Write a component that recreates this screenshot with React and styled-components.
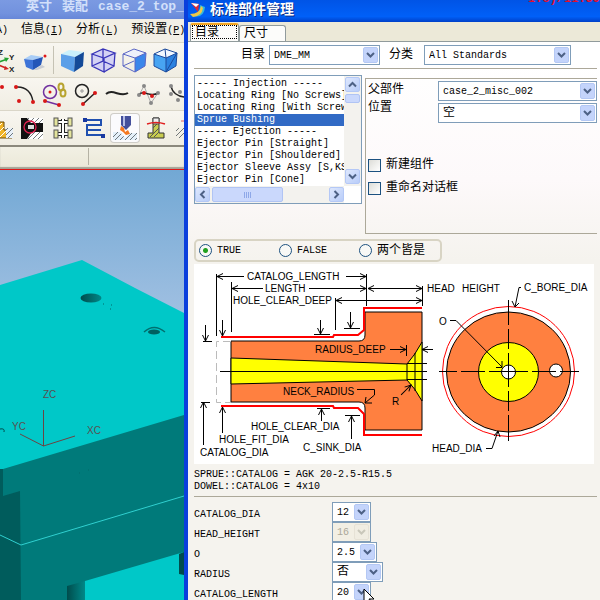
import { useState } from "react";
import styled, { createGlobalStyle } from "styled-components";

const GlobalStyle = createGlobalStyle`
    * {
        box-sizing: border-box;
    }
    body {
        margin: 0;
        overflow: hidden;
        font-family: "Liberation Mono", "Noto Sans CJK SC", monospace;
        font-size: 12px;
        line-height: 12px;
        color: #000;
    }
    button, select, input {
        font-family: inherit;
        color: inherit;
        margin: 0;
    }
`;

// Desktop
const Desktop = styled.div`
    display: flex;
    height: 100vh;
    overflow: hidden;
`;

const Latin = styled.span`
    font-size: 10px;
`;

// CAD window
const CadWindow = styled.section`
    flex: 0 0 184px;
    display: flex;
    flex-direction: column;
    overflow: hidden;
    white-space: nowrap;
`;

const CadTitle = styled.header`
    height: 19px;
    padding: 0 0 6px 26px;
    display: flex;
    align-items: center;
    gap: 10px;
    font-size: 13px;
    font-weight: bold;
    color: #d3e0fa;
    background: linear-gradient(#7b9ae2, #7292de 70%, #6787d8);
`;

const MenuBar = styled.nav`
    height: 23px;
    display: flex;
    align-items: center;
    gap: 13px;
    padding-left: 3px;
    margin-left: -37px;
    background: #f2efe6;
`;

const MenuButton = styled.button`
    flex: none;
    padding: 0;
    border: 0;
    background: none;
    font-size: 12px;
    line-height: 16px;
`;

const ToolBar = styled.div`
    height: ${props => props.$height}px;
    display: flex;
    align-items: center;
    background: linear-gradient(#f8f6f0, #f0ede2);
    border-top: 1px solid #dad6c8;
`;

const Tools = styled.div`
    display: flex;
    align-items: center;
    gap: 3px;
    margin-left: ${props => props.$shift}px;
`;

const ToolButton = styled.button`
    flex: none;
    width: 28px;
    height: 28px;
    padding: 0;
    border: 0;
    border-radius: 3px;
    background: ${props => (props.$active ? "#fbfbfd" : "none")};
    box-shadow: ${props => (props.$active ? "0 0 0 1px #cfcdc8" : "none")};
    svg {
        display: block;
    }
`;

const ToolDivider = styled.span`
    width: 1px;
    height: 28px;
    margin: 0 1px;
    background: #c5c2b4;
`;

const StatusBar = styled.div`
    height: 25px;
    display: flex;
    background: linear-gradient(#f2f0e4, #ebe8d8);
    border-top: 2px solid #8b887c;
    border-bottom: 1px solid #e01818;
    box-shadow: inset 0 -2px 1px #a5a294;
`;

const StatusCell = styled.div`
    width: 89px;
    margin: 1px 0 4px;
    border-right: 1px solid #b5b2a4;
`;

const Viewport = styled.div`
    flex: 1;
    min-height: 0;
    background: linear-gradient(#72a8d4, #a8c4e4 170px);
    svg {
        display: block;
        width: 100%;
        height: 100%;
    }
    text {
        font: 10px "Liberation Sans", sans-serif;
        fill: #5a5050;
    }
`;

// Dialog window
const Dialog = styled.section`
    position: relative;
    flex: 1;
    min-width: 0;
    display: flex;
    flex-direction: column;
    overflow: hidden;
    border-left: 4px solid #0a3fdc;
    background: linear-gradient(#ffffff 60px, #fdf9fa 180px, #f5f3ee 260px);
`;

const DialogTitle = styled.header`
    height: 22px;
    flex: none;
    display: flex;
    align-items: center;
    gap: 4px;
    padding: 0 0 2px 2px;
    color: #fff;
    background: linear-gradient(#0054e6, #0060f8 75%, #0040c8);
    h1 {
        margin: 0;
        font-size: 14px;
        line-height: 18px;
        text-shadow: 1px 1px 0 #0a2a80;
    }
    svg {
        flex: none;
    }
`;

const Clock = styled.span`
    position: absolute;
    top: -7px;
    right: 0;
    font-size: 12px;
    font-weight: bold;
    color: #e01030;
`;

const TabBar = styled.div`
    height: 20px;
    flex: none;
    display: flex;
    align-items: flex-end;
    padding: 2px 0 0 2px;
    background: #ece9d8;
    border-bottom: 1px solid #919b9c;
`;

const Tab = styled.button`
    width: ${props => (props.$active ? 49 : 47)}px;
    height: ${props => (props.$active ? 18 : 16)}px;
    padding: 0 0 0 4px;
    text-align: left;
    font-size: 12px;
    line-height: 12px;
    border: 1px solid #919b9c;
    border-bottom: 0;
    border-top: ${props => (props.$active ? "2px solid #f5a623" : "1px solid #919b9c")};
    border-radius: 3px 3px 0 0;
    background: #fcfcfa;
    outline: ${props => (props.$active ? "1px dotted #000" : "none")};
    outline-offset: -3px;
`;

const DialogBody = styled.div`
    padding: 0 3px 0 6px;
    border-left: 1px solid #b9b7ae;
    margin-left: -1px;
`;

const FilterRow = styled.div`
    height: 27px;
    display: flex;
    align-items: center;
    padding-left: 47px;
    border-bottom: 1px solid #aca899;
    label {
        flex: none;
    }
    label + span + label {
        margin-left: 9px;
    }
`;

const SelectBox = styled.span`
    display: grid;
    flex: none;
    width: ${props => props.$width};
    height: 20px;
    margin-left: ${props => props.$gap || 0}px;
    align-items: center;
    border: 1px solid #7f9db9;
    background: ${props => (props.$disabled ? "#f2efe4" : "#fff")};
    color: ${props => (props.$disabled ? "#aca899" : "#000")};
    select {
        grid-area: 1 / 1;
        width: 100%;
        height: 18px;
        padding: 0 18px 0 4px;
        border: 0;
        appearance: none;
        background: none;
        font-size: ${props => (props.$cjk ? 12 : 10)}px;
        opacity: 1;
    }
    svg {
        grid-area: 1 / 1;
        justify-self: end;
        margin-right: 1px;
        pointer-events: none;
    }
`;

const MainRow = styled.div`
    display: flex;
    gap: 3px;
    padding-top: 6px;
    align-items: flex-start;
`;

const ListFrame = styled.div`
    flex: 0 0 168px;
    height: 129px;
    display: grid;
    grid-template-columns: minmax(0, 1fr) 17px;
    grid-template-rows: 110px 17px;
    border: 1px solid #7f9db9;
    background: #fff;
`;

const List = styled.select`
    width: 100%;
    height: 110px;
    padding: 2px 0 0;
    border: 0;
    outline: none;
    background: #fff;
    overflow: hidden;
    scrollbar-width: none;
    font-size: 10px;
    option {
        height: 12px;
        min-height: 12px;
        padding: 0 2px;
        line-height: 12px;
        overflow: hidden;
    }
    option:checked {
        color: #fff;
        background: #316ac5 linear-gradient(#316ac5, #316ac5);
    }
`;

const ScrollBar = styled.div`
    display: flex;
    flex-direction: ${props => (props.$vertical ? "column" : "row")};
    justify-content: space-between;
    padding: ${props => (props.$vertical ? "1px 1px 2px" : "1px 0")};
    background: #f3f2ee;
`;

const ScrollButton = styled.button`
    width: 15px;
    height: 15px;
    padding: 0;
    border: 1px solid #b4c8f6;
    border-radius: 2px;
    background: linear-gradient(135deg, #dde7fd, #b9cdf9);
    svg {
        display: block;
        margin: auto;
        transform: rotate(${props => props.$turn}deg);
    }
`;

const Thumb = styled.div`
    width: ${props => (props.$wide ? "71px" : "15px")};
    height: ${props => (props.$wide ? "15px" : "9px")};
    display: flex;
    align-items: center;
    justify-content: center;
    border: 1px solid #b0c4f4;
    border-radius: 2px;
    background: #cad8fc;
    svg {
        display: ${props => (props.$wide ? "block" : "none")};
    }
`;

const ThumbGroup = styled.div`
    display: flex;
    flex-direction: ${props => (props.$vertical ? "column" : "row")};
    gap: 2px;
`;

const ParentPanel = styled.div`
    flex: 1;
    min-width: 0;
    height: 156px;
    margin-top: 3px;
    padding: 2px 0 0 2px;
    border: 1px solid #aca899;
    border-right: 0;
`;

const Field = styled.div`
    display: flex;
    justify-content: space-between;
    height: 22px;
    label {
        line-height: ${props => props.$line}px;
    }
`;

const Checks = styled.div`
    display: grid;
    gap: 10px;
    padding-top: 34px;
    label {
        display: flex;
        align-items: center;
        gap: 5px;
        line-height: 13px;
    }
    input {
        appearance: none;
        width: 13px;
        height: 13px;
        border: 1px solid #1c5180;
        background: linear-gradient(135deg, #dcdcd7, #fff);
    }
    input:checked {
        background: #21a121;
    }
`;

const Choices = styled.fieldset`
    display: flex;
    width: 248px;
    height: 23px;
    margin: 5px 0 2px;
    padding: 0 0 0 3px;
    border: 2px solid #d8d4c4;
    border-radius: 5px;
    align-items: center;
    label {
        display: flex;
        align-items: center;
        gap: 5px;
        width: 80px;
        white-space: nowrap;
    }
    input {
        appearance: none;
        width: 13px;
        height: 13px;
        border: 1px solid #1c5180;
        border-radius: 50%;
        background: #f8f8f6;
    }
    input:checked {
        background: radial-gradient(circle, #21a121 2px, #f8f8f6 3px);
    }
`;

const Drawing = styled.svg`
    display: block;
    width: 100%;
    max-width: 400px;
    background: #fff;
    text {
        font: 10px "Liberation Sans", Arial, sans-serif;
    }
`;

const Notes = styled.p`
    margin: 0;
    padding: 5px 0 3px;
    font-size: 10px;
    line-height: 12px;
    border-bottom: 1px solid #aca899;
`;

const Params = styled.div`
    padding-top: 5px;
`;

const Param = styled.div`
    display: grid;
    grid-template-columns: 138px auto;
    justify-content: start;
    height: 20px;
    label {
        font-size: 10px;
        line-height: 26px;
    }
`;

const Pointer = styled.svg`
    position: absolute;
    left: 175px;
    top: 588px;
`;

const components = [
    "----- Injection -----",
    "Locating Ring [No Screws]",
    "Locating Ring [With Screws]",
    "Sprue Bushing",
    "----- Ejection -----",
    "Ejector Pin [Straight]",
    "Ejector Pin [Shouldered]",
    "Ejector Sleeve Assy [S,KS]",
    "Ejector Pin [Cone]",
];

const params = [
    { name: "CATALOG_DIA", value: "12", width: 39 },
    { name: "HEAD_HEIGHT", value: "16", width: 39, disabled: true },
    { name: "O", value: "2.5", width: 45 },
    { name: "RADIUS", value: "否", width: 51, cjk: true },
    { name: "CATALOG_LENGTH", value: "20", width: 39 },
];

const Chevron = () => (
    <svg width="9" height="7" viewBox="0 0 9 7">
        <path d="M1 1.5 L4.5 5 L8 1.5" fill="none" stroke="#4d6185" strokeWidth="2" />
    </svg>
);

const Combo = ({ id, value, width, gap, cjk, disabled }) => (
    <SelectBox $width={width} $gap={gap} $cjk={cjk} $disabled={disabled}>
        <select id={id} disabled={disabled} defaultValue={value}>
            <option>{value}</option>
        </select>
        <svg width="15" height="16" viewBox="0 0 15 16">
            <rect x="0.5" y="0.5" width="14" height="15" rx="1.5" fill={disabled ? "#f0ede2" : "#c4d4fb"} stroke={disabled ? "#e6e2d6" : "#b4c8f4"} />
            <path d="M4 6 L7.5 9.5 L11 6" fill="none" stroke={disabled ? "#c9c7ba" : "#4d6185"} strokeWidth="2" />
        </svg>
    </SelectBox>
);

const Icon = ({ children }) => (
    <svg width="28" height="28" viewBox="0 0 28 28" fill="none">{children}</svg>
);

const viewTools = [
    ["坐标系", <Icon>
        <path d="M6 17 L16 13.5" stroke="#22a030" strokeWidth="1.5" />
        <path d="M19 12 L14 11.5 L16 16 Z" fill="#22a030" />
        <path d="M6 18 L16 22" stroke="#d02020" strokeWidth="1.5" />
        <path d="M19 23 L15 20 L14 24 Z" fill="#d02020" />
        <g fill="#222" fontSize="8" fontWeight="bold" fontFamily="Liberation Sans">
            <text x="8" y="9">Z</text>
            <text x="19" y="14">Y</text>
            <text x="19" y="26">X</text>
        </g>
    </Icon>],
    ["实体", <Icon>
        <path d="M3 13 L10 9 L22 11 L12 14 Z" fill="#a9cdf6" />
        <path d="M3 13 L12 14 L12 24 L5 21 Z" fill="#3e74d8" />
        <path d="M12 14 L22 11 L20 19 L12 24 Z" fill="#2456b8" />
        <path d="M12 24 L21 19 L24 21 L16 24 Z" fill="#c9ccd2" />
        <circle cx="24" cy="10" r="1.5" fill="#e01818" />
    </Icon>],
    null,
    ["着色", <Icon>
        <path d="M3 8 L11 4 L26 6 L17 11 Z" fill="#c9f0fc" />
        <path d="M3 8 L17 11 L16 26 L3 20 Z" fill="#5b9fe8" />
        <path d="M17 11 L26 6 L25 20 L16 26 Z" fill="#144a98" />
    </Icon>],
    ["线框", <Icon>
        <path d="M3 8 L14 3 L26 7 L25 20 L15 26 L3 20 Z" fill="#d4d2f4" />
        <path d="M3 8 L14 3 L26 7 L15 12 Z M3 8 L3 20 L15 26 L15 12 M26 7 L25 20 L15 26 M14 3 L14 15 L3 20 M14 15 L25 20" stroke="#3834b8" strokeWidth="1.3" />
    </Icon>],
    ["局部着色", <Icon>
        <path d="M3 8 L14 3 L26 7 L15 12 Z" fill="#eef0fa" />
        <path d="M15 12 L26 7 L25 20 L15 26 Z" fill="#3b86ea" />
        <path d="M3 8 L14 3 L26 7 L15 12 Z M3 8 L3 20 L15 26 L15 12 M26 7 L25 20 L15 26 M14 15 L3 20" stroke="#5a66c4" />
    </Icon>],
    ["面分析", <Icon>
        <path d="M3 8 L14 3 L26 7 L15 12 Z" fill="#f2f8ff" />
        <path d="M3 8 L15 12 L15 26 L3 20 Z" fill="#48a4f2" />
        <path d="M15 12 L26 7 L25 20 L15 26 Z" fill="#2c82e0" />
        <path d="M3 8 L14 3 L26 7 L15 12 Z M3 8 L3 20 L15 26 L15 12 M26 7 L25 20 L15 26 L26 7 M14 3 L15 12" stroke="#1c4a9c" />
    </Icon>],
];

const curveTools = [
    ["点", <Icon><circle cx="22" cy="7" r="2" fill="#d81818" /></Icon>],
    ["圆弧", <Icon>
        <path d="M5 7 C15 6 21 13 22 22" stroke="#222" strokeWidth="1.5" />
        <circle cx="5" cy="7" r="2" fill="#d81818" />
        <circle cx="22" cy="22" r="2" fill="#d81818" />
        <circle cx="8" cy="21" r="2" fill="#d81818" />
    </Icon>],
    ["关联圆", <Icon>
        <circle cx="8" cy="12" r="6.5" stroke="#7030a0" strokeWidth="1.5" />
        <circle cx="8" cy="12" r="1.5" fill="#d81818" />
        <path d="M3 21 L17 25" stroke="#7030a0" strokeWidth="1.5" />
        <circle cx="3" cy="21" r="2" fill="#d81818" />
        <circle cx="17" cy="25" r="2" fill="#d81818" />
        <ellipse cx="19" cy="7" rx="2.5" ry="3.5" stroke="#b8a430" strokeWidth="2" />
        <ellipse cx="21" cy="13" rx="2.5" ry="3.5" stroke="#b8a430" strokeWidth="2" />
    </Icon>],
    ["基本曲线", <Icon>
        <circle cx="9" cy="11" r="6.5" stroke="#222" strokeWidth="1.5" />
        <path d="M7 11 H11 M9 9 V13" stroke="#999" />
        <path d="M10 24 L22 13" stroke="#222" strokeWidth="1.5" />
        <circle cx="10" cy="24" r="2" fill="#d81818" />
        <circle cx="22" cy="13" r="2" fill="#d81818" />
    </Icon>],
    ["样条", <Icon><path d="M2 14 C9 8 16 18 24 13" stroke="#222" strokeWidth="2" /></Icon>],
    ["艺术样条", <Icon>
        <path d="M4 15 L9 6 L16 23 L23 13" stroke="#aaa" />
        <path d="M4 15 C8 9 15 18 23 13" stroke="#222" strokeWidth="1.5" />
        <g fill="#888"><circle cx="4" cy="15" r="2" /><circle cx="9" cy="6" r="2" /><circle cx="16" cy="23" r="2" /><circle cx="23" cy="13" r="2" /></g>
        <circle cx="9" cy="13" r="2" fill="#d81818" />
        <circle cx="17" cy="16" r="2" fill="#d81818" />
    </Icon>],
    ["拟合", <Icon>
        <path d="M5 6 C6 12 11 17 20 17" stroke="#222" strokeWidth="1.5" />
        <g fill="#888"><circle cx="5" cy="6" r="2" /><circle cx="5" cy="14" r="2" /><circle cx="12" cy="20" r="2" /><circle cx="14" cy="12" r="2" /></g>
    </Icon>],
];

const hatch = (
    <pattern id="hatch" width="5" height="5" patternUnits="userSpaceOnUse">
        <path d="M-1 6 L6 -1 M-1 1 L1 -1 M4 6 L6 4" stroke="#50585c" strokeWidth="0.8" />
    </pattern>
);

const moldTools = [
    ["模架", <Icon>
        <path d="M10 8 H17 V16 H25 V24 H10 Z" fill="#f0b428" stroke="#6a4a08" />
        <path d="M10 14 L15 9 M10 20 L17 13 M13 23 L20 16" stroke="#fff" />
        <path d="M19 14 H26 V24 H19 Z" fill="#e8f0f8" />
        <path d="M19 14 H26 V24 H19 Z" fill="url(#hatch)" />
    </Icon>],
    ["浇口", <Icon>
        <path d="M3 4 H25 V25 H3 Z" fill="#111" />
        <path d="M9 4 H25 V9 H13 Z M9 25 L14 18 H25 V25 Z" fill="#fff" />
        <path d="M9 4 H25 V9 H13 Z M9 25 L14 18 H25 V25 Z" fill="url(#hatch)" />
        <path d="M10 11 H16 V15 H10 Z" fill="#ddd" />
        <circle cx="12" cy="13" r="6" stroke="#e02050" strokeWidth="1.3" />
    </Icon>],
    ["流道", <Icon>
        <path d="M14 5 V24 M9 8 H19 M9 20 H19" stroke="#222" strokeWidth="4" />
        <path d="M14 5 V24 M9 8 H19 M9 20 H19" stroke="#fff" strokeWidth="2" />
        <g fill="#e4e49c" stroke="#555"><rect x="5" y="4" width="4" height="8" /><rect x="19" y="4" width="4" height="8" /><rect x="5" y="16" width="4" height="8" /><rect x="19" y="16" width="4" height="8" /></g>
    </Icon>],
    ["冷却", <Icon>
        <path d="M5 6 H21 V11 H7 V16 H21 M7 16 V21 H23" stroke="#2050b0" strokeWidth="2" />
        <rect x="3" y="4" width="4" height="4" fill="#1838a0" />
        <rect x="21" y="20" width="4" height="4" fill="#1838a0" />
    </Icon>],
    ["电极", <Icon>
        <path d="M10 2 H20 V11 L15 16 L10 11 Z" fill="#44509c" />
        <path d="M12 2 H14 V12 H12 Z" fill="#b4bce4" />
        <path d="M2 18 L9 18 L14 24 L19 19 H26 V26 H2 Z" fill="#e4f0fa" />
        <path d="M2 18 L9 18 L14 24 L19 19 H26 V26 H2 Z" fill="url(#hatch)" />
        <path d="M10 12 L13 14 L14 18 L17 16 L19 20 L15 21 L12 18 L9 16 Z" fill="#f47820" />
    </Icon>],
    ["修剪", <Icon>
        <path d="M11 4 H17 V19 H22 V24 H6 V19 H11 Z" fill="#c8cc50" stroke="#333" />
        <path d="M8 23 L17 14 M12 23 L17 18 M11 14 L17 8" stroke="#555" />
        <path d="M11 4 H17 V10 H11 Z" fill="#eee" stroke="#444" />
        <path d="M5 10 Q14 7 23 10" stroke="#e02020" strokeWidth="1.5" />
    </Icon>],
    ["腔体", <Icon>
        <path d="M3 14 H12 V24 H3 Z" fill="url(#hatch)" />
        <path d="M8 7 H18 V13 H12 V18" stroke="#e06060" />
    </Icon>],
];

const ToolRow = ({ tools, height, shift, active }) => (
    <ToolBar $height={height}>
        <Tools $shift={shift}>
            {tools.map((tool, index) => (
                tool === null
                    ? <ToolDivider key={index} />
                    : <ToolButton key={index} aria-label={tool[0]} $active={active === index}>{tool[1]}</ToolButton>
            ))}
        </Tools>
    </ToolBar>
);

// Arrow with an open head at (x, y), pointing along the given angle
const Arrow = ({ x, y, turn = 0, length = 0 }) => (
    <path d={`M-6 -3 L0 0 L-6 3 M0 0 H${-length}`} transform={`translate(${x} ${y}) rotate(${turn})`} />
);

const Model = () => (
    <svg viewBox="0 0 184 430" preserveAspectRatio="xMinYMin slice">
        <defs>
            <linearGradient id="hole"><stop offset="0" stopColor="#004c4c" /><stop offset="1" stopColor="#008888" /></linearGradient>
        </defs>
        <path d="M0 115 L82 90 L135 118 L184 143 V430 H0 Z" fill="#00c8c8" />
        <path d="M3 299 L184 245 V382 L85 411 V430 H21 L3 326 Z" fill="#007a7a" />
        <path d="M0 299 H3 V326 L20 321 L21 430 H0 Z" fill="#005c5c" />
        <path d="M67 416 L85 411 V430 H67 Z" fill="url(#hole)" />
        <path d="M179 384 L184 382 V405 L179 404 Z" fill="#004c4c" />
        <path d="M0 365 L21 375 L184 326" fill="none" stroke="#30d0d0" />
        <ellipse cx="91" cy="128" rx="10.5" ry="4.5" fill="url(#hole)" />
        <ellipse cx="154" cy="162" rx="6" ry="2.5" fill="#006060" />
        <path d="M144 162 Q154 153 165 162" fill="none" stroke="#007070" strokeWidth="1.5" />
        <path d="M103 134 h1 M111 135 h1 M110 139 h1 M79 303 h1 M88 300 h1" stroke="#006868" />
        <path d="M0 259 Q5 258 4 262" fill="none" stroke="#004c4c" />
        <path d="M43.5 240 V276 L20 264 M43.5 276 L75 266" fill="none" stroke="#6b4444" />
        <text x="43" y="228">ZC</text>
        <text x="12" y="260">YC</text>
        <text x="87" y="264">XC</text>
    </svg>
);

const SprueDrawing = () => (
    <Drawing viewBox="0 0 400 200" role="img" aria-label="Sprue Bushing">
        {/* section view */}
        <path d="M37 77 H165 Q171 77 171 71 V48 H228 V166 H171 V144 Q171 138 165 138 H37 Z" fill="#ff8040" stroke="#000" />
        <path d="M37 94 L213 100 Q221 91 228 78 V137 Q221 124 213 116 L37 120 Z" fill="#ff0" stroke="#000" />
        <path d="M213 100 V116 M221 89 V127" stroke="#000" />
        <g fill="none" stroke="#f00" strokeWidth="2">
            <path d="M27 73 H139 L140 71 H164 L170 66 V44 H228" />
            <path d="M27 142 H139 L140 144 H164 L170 150 V171 H228" />
        </g>
        <path d="M37 77.5 H22.5 V138.5 H37" fill="none" stroke="#bbb" strokeDasharray="8 4" />
        <g fill="none" stroke="#000" shapeRendering="crispEdges">
            <path d="M26 107.5 H233 M213 99.5 H233 M213 115.5 H233" />
            <path d="M22.5 10 V72 M37.5 18 V68 M172.5 10 V42 M141.5 34 V66 M228.5 22 V42 M212.5 81 V92" />
            <path d="M9 77.5 H18 M120 70.5 H136 M150 64.5 H166 M7 138.5 H16 M123 144.5 H136 M151 151.5 H166" />
        </g>
        <g fill="none" stroke="#000">
            <Arrow x={23} y={12.5} turn={180} length={27} />
            <Arrow x={172} y={12.5} length={20} />
            <Arrow x={38} y={24.5} turn={180} length={31} />
            <Arrow x={172} y={24.5} length={57} />
            <Arrow x={174} y={24.5} turn={180} length={20} />
            <Arrow x={228} y={24.5} length={40} />
            <Arrow x={142} y={36.5} turn={180} length={60} />
            <Arrow x={228} y={36.5} length={40} />
            <Arrow x={11.5} y={77} turn={90} length={16} />
            <Arrow x={28.5} y={72} turn={90} length={16} />
            <Arrow x={126.5} y={70} turn={90} length={14} />
            <Arrow x={156.5} y={64} turn={90} length={16} />
            <Arrow x={9.5} y={138} turn={-90} length={43} />
            <Arrow x={28.5} y={143} turn={-90} length={26} />
            <Arrow x={127.5} y={145} turn={-90} length={12} />
            <Arrow x={157.5} y={152} turn={-90} length={23} />
            <Arrow x={212} y={85.5} length={16} />
            <Arrow x={228} y={85.5} turn={180} length={11} />
            <Arrow x={217} y={121} turn={-45} length={14} />
            <path d="M163 125.5 H180.5 V131 L171 139 M172 133 L171 139 L178 139" />
        </g>
        {/* end view */}
        <ellipse cx="314.5" cy="107.5" rx="66" ry="65" fill="#fff" stroke="#f00" />
        <ellipse cx="314.5" cy="108" rx="62" ry="60" fill="#ff8040" stroke="#000" />
        <ellipse cx="314.5" cy="108" rx="30" ry="29.5" fill="#ff0" stroke="#000" />
        <circle cx="314.5" cy="108" r="7" fill="#fff" stroke="#000" />
        <circle cx="362" cy="106.5" r="6.5" fill="#fff" stroke="#000" />
        <g fill="none" stroke="#000">
            <path d="M245 107.5 H385" strokeDasharray="18 4 24 4 39 4 24 4 19" />
            <path d="M314.5 36 V177" strokeDasharray="25 4 20 4 34 4 20 4 26" />
            <path d="M256 56.5 H262 L308 103 M308 97 V103.5 H302" />
            <path d="M327 23.5 H325 L321 43 M318 37 L321 43 L325 39" />
            <path d="M292 184.5 H298 L304 167 M300 172 L304 167 L306 173" />
        </g>
        <g fill="#000">
            <text x="53" y="16">CATALOG_LENGTH</text>
            <text x="71" y="28">LENGTH</text>
            <text x="39" y="40">HOLE_CLEAR_DEEP</text>
            <text x="233" y="28">HEAD</text>
            <text x="268" y="28">HEIGHT</text>
            <text x="330" y="27">C_BORE_DIA</text>
            <text x="121" y="89">RADIUS_DEEP</text>
            <text x="89" y="131">NECK_RADIUS</text>
            <text x="198" y="141">R</text>
            <text x="57" y="166">HOLE_CLEAR_DIA</text>
            <text x="25" y="179">HOLE_FIT_DIA</text>
            <text x="6" y="192">CATALOG_DIA</text>
            <text x="109" y="187">C_SINK_DIA</text>
            <text x="245" y="61">O</text>
            <text x="238" y="188">HEAD_DIA</text>
        </g>
    </Drawing>
);

const StandardPartDialog = () => {
    const [part, setPart] = useState("Sprue Bushing");
    const [choice, setChoice] = useState("TRUE");

    return (
        <Dialog>
            <DialogTitle>
                <svg width="16" height="16" viewBox="0 0 16 16">
                    <path d="M2 14 Q14 17 15 5 L10 3 Q11 10 2 14 Z" fill="#38b8d8" />
                    <path d="M0 12 Q10 12 11 4 L13 6 Q12 14 3 15 Z" fill="#f0c848" />
                    <path d="M1 1 L9 2 L8 10 Z" fill="#e02830" />
                    <path d="M1 1 L9 2 L6 5 Z" fill="#fff" />
                </svg>
                <h1>标准部件管理</h1>
                <Clock>1.8)/11.59</Clock>
            </DialogTitle>
            <TabBar role="tablist">
                <Tab role="tab" $active>目录</Tab>
                <Tab role="tab">尺寸</Tab>
            </TabBar>
            <DialogBody>
                <FilterRow>
                    <label htmlFor="catalog">目录</label>
                    <Combo id="catalog" value="DME_MM" width="111px" gap={4} />
                    <label htmlFor="category">分类</label>
                    <Combo id="category" value="All Standards" width="147px" gap={11} />
                </FilterRow>
                <MainRow>
                    <ListFrame>
                        <List size={9} aria-label="标准部件" value={part} onChange={e => setPart(e.target.value)}>
                            {components.map(name => <option key={name}>{name}</option>)}
                        </List>
                        <ScrollBar $vertical>
                            <ThumbGroup $vertical>
                                <ScrollButton $turn={180} aria-label="向上"><Chevron /></ScrollButton>
                                <Thumb />
                            </ThumbGroup>
                            <ScrollButton $turn={0} aria-label="向下"><Chevron /></ScrollButton>
                        </ScrollBar>
                        <ScrollBar>
                            <ThumbGroup>
                                <ScrollButton $turn={90} aria-label="向左"><Chevron /></ScrollButton>
                                <Thumb $wide>
                                    <svg width="8" height="6" viewBox="0 0 8 6"><path d="M0.5 0 V6 M2.5 0 V6 M4.5 0 V6 M6.5 0 V6" stroke="#8ea8e8" /></svg>
                                </Thumb>
                            </ThumbGroup>
                            <ScrollButton $turn={-90} aria-label="向右"><Chevron /></ScrollButton>
                        </ScrollBar>
                    </ListFrame>
                    <ParentPanel>
                        <Field $line={18}>
                            <label htmlFor="parent">父部件</label>
                            <Combo id="parent" value="case_2_misc_002" width="159px" />
                        </Field>
                        <Field $line={10}>
                            <label htmlFor="position">位置</label>
                            <Combo id="position" value="空" width="159px" cjk />
                        </Field>
                        <Checks>
                            <label><input type="checkbox" />新建组件</label>
                            <label><input type="checkbox" />重命名对话框</label>
                        </Checks>
                    </ParentPanel>
                </MainRow>
                <Choices>
                    {["TRUE", "FALSE", "两个皆是"].map(name => (
                        <label key={name}>
                            <input type="radio" name="side" checked={choice === name} onChange={() => setChoice(name)} />
                            {name[0] > "Z" ? name : <Latin>{name}</Latin>}
                        </label>
                    ))}
                </Choices>
                <SprueDrawing />
                <Notes>
                    SPRUE::CATALOG = AGK 20-2.5-R15.5<br />
                    DOWEL::CATALOG = 4x10
                </Notes>
                <Params>
                    {params.map(item => (
                        <Param key={item.name}>
                            <label htmlFor={item.name}>{item.name}</label>
                            <Combo id={item.name} value={item.value} width={`${item.width}px`} cjk={item.cjk} disabled={item.disabled} />
                        </Param>
                    ))}
                </Params>
            </DialogBody>
            <Pointer width="12" height="19" viewBox="0 0 12 19">
                <path d="M1 1 V15 L4 12 L7 18 L9 17 L6 11 H11 Z" fill="#fff" stroke="#000" />
            </Pointer>
        </Dialog>
    );
};

const App = () => (
    <>
        <GlobalStyle />
        <svg width="0" height="0" style={{ position: "absolute" }}><defs>{hatch}</defs></svg>
        <Desktop>
            <CadWindow>
                <CadTitle>
                    <span>英寸</span>
                    <span>装配</span>
                    <span>case_2_top_</span>
                </CadTitle>
                <MenuBar>
                    <MenuButton>工具<Latin>(A)</Latin></MenuButton>
                    <MenuButton>信息<Latin>(<u>I</u>)</Latin></MenuButton>
                    <MenuButton>分析<Latin>(<u>L</u>)</Latin></MenuButton>
                    <MenuButton>预设置<Latin>(<u>P</u>)</Latin></MenuButton>
                </MenuBar>
                <ToolRow tools={viewTools} height={35} shift={-10} />
                <ToolRow tools={curveTools} height={33} shift={-20} />
                <ToolRow tools={moldTools} height={35} shift={-13} active={4} />
                <StatusBar><StatusCell /></StatusBar>
                <Viewport><Model /></Viewport>
            </CadWindow>
            <StandardPartDialog />
        </Desktop>
    </>
);

export default App;
